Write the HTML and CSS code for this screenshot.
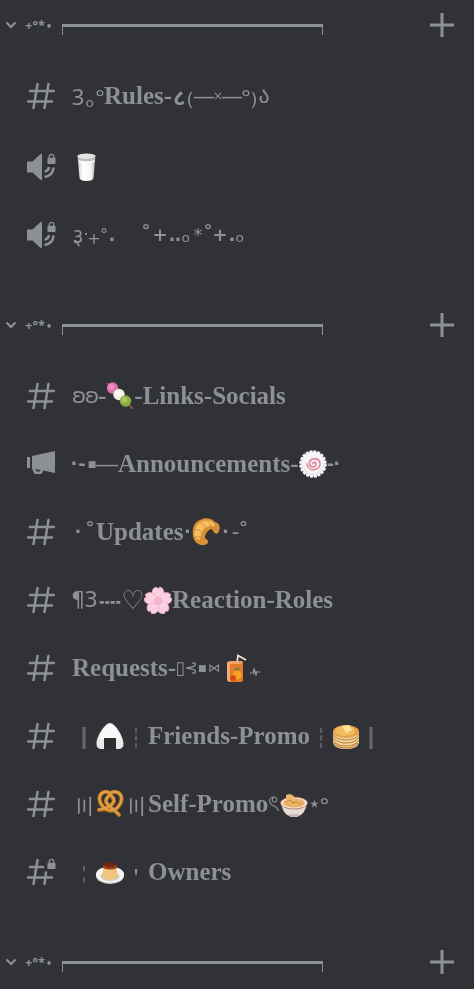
FILE: index.html
```html
<!DOCTYPE html>
<html lang="en">
<head>
  <meta charset="UTF-8">
  <meta name="viewport" content="width=device-width, initial-scale=1">
  <title>Channels</title>
  <link rel="stylesheet" href="styles.css">
</head>

<body>
  <!-- shared icons -->
  <svg class="defs" aria-hidden="true">
    <symbol id="hash" viewBox="0 0 28 28">
      <path d="M10.500 2 6.500 26M21.500 2 17.500 26M3 9H27M1 19.500H25" />
    </symbol>
    <symbol id="lock" viewBox="0 0 10 12">
      <path d="M2.500 5V3.300a2.500 2.500 0 0 1 5 0V5" fill="none" stroke="currentColor" stroke-width="1.400" />
      <rect x="0.500" y="4.600" width="9" height="7" rx="1" fill="currentColor" />
    </symbol>
    <symbol id="speaker" viewBox="0 0 28 28">
      <path d="M0 8.500H5.500L13 1.500Q15 0 15 2V26Q15 28 13 26.500L5.500 19.500H0Z" fill="currentColor" />
      <path d="M17.500 18.500Q21.500 18 22 14M17.500 24Q26 22.500 26.500 14.500" fill="none" stroke="currentColor" stroke-width="2.600" />
    </symbol>
    <symbol id="chevron" viewBox="0 0 10 8">
      <path d="M.5 1.500 5 6 9.500 1.500" />
    </symbol>
    <symbol id="plus" viewBox="0 0 24 24">
      <path d="M12 0V24M0 12H24" />
    </symbol>
  </svg>

  <nav class="sidebar">
    <section class="category">
      <header class="category-header">
        <button class="toggle" type="button">
          <svg class="chevron"><use href="#chevron" /></svg>
          <span class="stars">+°*<b>•</b></span>
          <span class="rule"></span>
        </button>
        <button class="add" type="button" aria-label="Create channel"><svg><use href="#plus" /></svg></button>
      </header>
      <div class="channels">
        <a class="channel text" href="#">
          <svg class="icon hash"><use href="#hash" /></svg>
          <span class="name"><i class="sym w12 noto">3</i><i class="sym w12 low">ₒ</i><i class="sym w8 noto">°</i>Rules-<i class="sym w14 noto bold">८</i><i class="sym w8 low medium">(</i><i class="dash">—</i><i class="sym w8 tiny">×</i><i class="dash">—</i><i class="sym w8 noto">°</i><i class="sym w8 low medium">)</i><i class="sym w12">ა</i></span>
        </a>
        <a class="channel voice" href="#">
          <svg class="icon"><use href="#speaker" /><use href="#lock" x="20" y="0" width="9" height="12" /></svg>
          <span class="name">
            <svg class="emoji" viewBox="0 0 28 28" role="img" aria-label="Glass of milk">
              <defs><linearGradient id="milk"><stop stop-color="#c9c7c6" /><stop offset=".3" stop-color="#fff" /><stop offset=".75" stop-color="#f5f3f2" /><stop offset="1" stop-color="#aaa8a8" /></linearGradient></defs>
              <path d="M5.500 2.500 7.500 25Q8 28 14.500 28T21.500 25L23.500 2.500Z" fill="url(#milk)" />
              <ellipse cx="14.500" cy="3" rx="9" ry="2.500" fill="#e5e3e1" />
              <path d="M6 4.500Q14 7 23 4.500V7.500Q14 10 6.500 7.500Z" fill="#bdbbb9" />
              <path d="M7 8Q14 10.500 22.500 8" fill="none" stroke="#fff" stroke-width="1.500" />
            </svg>
          </span>
        </a>
        <a class="channel voice" href="#">
          <svg class="icon"><use href="#speaker" /><use href="#lock" x="20" y="0" width="9" height="12" /></svg>
          <span class="name"><i class="sym w12 noto">३</i><i class="sym w4 small">·</i><i class="sym w12 low small">+</i><i class="sym w8 small">°</i><i class="sym w8 heavy">.</i><i class="sym w24"></i><i class="sym w12">˚</i><i class="sym w16 heavy">+</i><i class="sym w8 heavy">.</i><i class="sym w4 heavy">.</i><i class="sym w12">ₒ</i><i class="sym w12 star">*</i><i class="sym w8">˚</i><i class="sym w16 heavy">+</i><i class="sym w8 heavy">.</i><i class="sym w8">ₒ</i></span>
        </a>
      </div>
    </section>

    <section class="category">
      <header class="category-header">
        <button class="toggle" type="button">
          <svg class="chevron"><use href="#chevron" /></svg>
          <span class="stars">+°*<b>•</b></span>
          <span class="rule"></span>
        </button>
        <button class="add" type="button" aria-label="Create channel"><svg><use href="#plus" /></svg></button>
      </header>
      <div class="channels">
        <a class="channel text" href="#">
          <svg class="icon hash"><use href="#hash" /></svg>
          <span class="name"><i class="sym w14">ʚ</i><i class="sym w12">ʚ</i>-<svg class="emoji" viewBox="0 0 28 28" role="img" aria-label="Dango">
              <path d="M1 1 27 27" stroke="#a8642f" stroke-width="1.500" />
              <circle cx="6.500" cy="6" r="5.700" fill="#dd6fa9" /><circle cx="5.500" cy="5" r="3" fill="#ec8dc0" />
              <circle cx="13" cy="12.500" r="5.700" fill="#f2eee2" /><circle cx="12" cy="11.500" r="3" fill="#fffdf5" />
              <circle cx="19.500" cy="19" r="5.700" fill="#8bac3e" /><circle cx="18.500" cy="18" r="3" fill="#a8c660" />
            </svg>-Links-Socials</span>
        </a>
        <a class="channel text" href="#">
          <svg class="icon" viewBox="0 0 28 28">
            <path d="M0 7H3V18H0ZM5 6 28 1V23L16 20.500V21Q15.500 24 13.500 24H9Q7 24 6.500 22L5 18.500ZM8.500 19 9.500 21.500H12.500L13.500 20Z" fill="currentColor" fill-rule="evenodd" />
          </svg>
          <span class="name"><i class="sym w4 heavy">·</i><i class="sym w12 heavy">‐</i><i class="sym w8 micro">■</i><i class="dash wide">—</i>Announcements-<svg class="emoji" viewBox="0 0 28 28" role="img" aria-label="Fish cake">
              <circle cx="14" cy="14" r="12.500" fill="#e9e7ee" stroke="#f7f6fa" stroke-width="2.500" stroke-dasharray="2.800 1.130" />
              <circle cx="14" cy="13" r="10.500" fill="#f7f5f8" />
              <path d="M14 13.500c0-2 3-1.500 3 .5 0 4-6.500 4-6.500-.5 0-6 9.500-6.500 10.500-.5 1 8-12 9.500-13 1" fill="none" stroke="#e391a0" stroke-width="1.800" stroke-linecap="round" />
            </svg><i class="sym w8 heavy">‐</i><i class="sym w4 heavy">·</i></span>
        </a>
        <a class="channel text" href="#">
          <svg class="icon hash"><use href="#hash" /></svg>
          <span class="name"><i class="sym w12 heavy">·</i><i class="sym w12">˚</i>Updates<i class="sym w8 heavy">·</i><svg class="emoji" viewBox="0 0 28 28" role="img" aria-label="Croissant">
              <path d="M1 18C0 10 2 4 8 2 13-1 20 0 23 4 28 5 29 10 26 15 24 17 21 14 20 11 17 11 13 15 13 20 15 22 18 23 15 26 10 29 2 26 1 18Z" fill="#d98f35" />
              <path d="M2 16C3 9 6 4 11 3 17 1 22 4 24 9 18 6 9 9 8 22 5 22 3 20 2 16Z" fill="#f6bd62" />
              <path d="M2 12Q7 10 12 16M7 4Q13 6 14 12M15 2Q20 6 18 10M23 5Q25 9 21 12M2 20Q7 17 12 21" fill="none" stroke="#c67e31" stroke-width=".7" />
            </svg><i class="sym w12 heavy">·</i><i class="sym w8">-</i><i class="sym w8">˚</i></span>
        </a>
        <a class="channel text" href="#">
          <svg class="icon hash"><use href="#hash" /></svg>
          <span class="name"><i class="sym w12">¶</i><i class="sym w14">3</i><i class="sym w24 cjk">┉</i><i class="sym w22 big">♡</i><svg class="emoji" viewBox="0 0 28 28" role="img" aria-label="Cherry blossom">
              <g fill="#fad0e0" stroke="#efa9c7" stroke-width=".6">
                <path id="petal" d="M14 15C5 9 8 2 12 1L14 2.500 16 1C20 2 23 9 14 15Z" />
                <use href="#petal" transform="rotate(72 14 15)" /><use href="#petal" transform="rotate(144 14 15)" />
                <use href="#petal" transform="rotate(216 14 15)" /><use href="#petal" transform="rotate(288 14 15)" />
              </g>
              <circle cx="14" cy="15" r="3.500" fill="#f5b9ce" stroke="#c9788f" stroke-width=".7" stroke-dasharray="1 1" />
            </svg>Reaction-Roles</span>
        </a>
        <a class="channel text" href="#">
          <svg class="icon hash"><use href="#hash" /></svg>
          <span class="name">Requests-<i class="sym w8 medium">▯</i><i class="sym w14 small">⊰</i><i class="sym w8 micro">■</i><i class="sym w16 tiny">⋈</i><svg class="emoji" viewBox="0 0 28 28" role="img" aria-label="Juice box">
              <path d="M15 9 16 1.500 24 6" fill="none" stroke="#eadfd0" stroke-width="1.800" />
              <path d="M5 8 8 7H20L21 8V27L19 28H7L5 26Z" fill="#e77a28" />
              <path d="M5 8H8V28H7L5 26Z" fill="#f4ac78" /><path d="M8 7H20L19 10H5Z" fill="#f2a46a" />
              <circle cx="15" cy="21" r="4.500" fill="#f5a51f" /><circle cx="11" cy="24" r="3" fill="#d84b1d" />
              <path d="M12 16Q15 11 18 15Q15 18 12 16Z" fill="#79852f" />
            </svg><svg class="pulse" viewBox="0 0 10 8"><path d="M0 5H1.500M3 6 4 1 6 7 7 3M8.500 4H10" /></svg></span>
        </a>
        <a class="channel text" href="#">
          <svg class="icon hash"><use href="#hash" /></svg>
          <span class="name"><i class="sym w24 cjk">║</i><svg class="emoji" viewBox="0 0 28 28" role="img" aria-label="Rice ball">
              <path d="M14 1C19 1 27 14 27.500 21Q28 27 22 27H6Q0 27 .5 21C1 14 9 1 14 1Z" fill="#e9e9eb" />
              <path d="M14 2C18 2 23 10 25 16Q14 21 3 16C5 10 10 2 14 2Z" fill="#f8f8f8" />
              <path d="M8 16H20V27H8Z" fill="#2b2d2c" />
            </svg><i class="sym w24 cjk">┆</i>Friends-Promo<i class="sym w22 cjk">┆</i><svg class="emoji" viewBox="0 0 28 28" role="img" aria-label="Pancakes">
              <path d="M1 10V21Q3 27 14 27T27 21V10Z" fill="#f2d59d" />
              <path d="M1 12Q4 18 14 18T27 12M1 15Q4 21 14 21T27 15M1 18Q4 24 14 24T27 18M2 21Q6 26 14 26T26 21" fill="none" stroke="#b97834" />
              <ellipse cx="14" cy="9.500" rx="13" ry="6.500" fill="#e2a146" />
              <ellipse cx="13" cy="9" rx="10" ry="5" fill="#f2bd5c" />
              <path d="M10 4 17 3 20 8 14 11 12 8Z" fill="#ffe499" />
            </svg><i class="sym w22 cjk">║</i></span>
        </a>
        <a class="channel text" href="#">
          <svg class="icon hash"><use href="#hash" /></svg>
          <span class="name"><i class="sym w24 cjk">〣</i><svg class="emoji" viewBox="0 0 28 28" role="img" aria-label="Pretzel">
              <g fill="none" stroke-linecap="round" stroke-linejoin="round">
                <path id="knot" d="M3 20C10 20 17 15 18 11 18 7 14 6 14 4 16 1 23 1 25 6 27 12 22 20 15 21 7 20 2 12 4 6 6 1 12 1 14 4 14 6 9 8 10 12 12 17 19 20 23 25" stroke="#a9651c" stroke-width="4.200" />
                <path d="M3 19.500C10 19.500 17 14.500 18 10.500 18 6.500 14 5.500 14 3.500 16 1 23 1 25 5.500 27 11.500 22 19.500 15 20.500 7 19.500 2 11.500 4 5.500 6 1 12 1 14 3.500 14 5.500 9 7.500 10 11.500 12 16.500 19 19.500 23 24.500" stroke="#dda044" stroke-width="2.600" />
              </g>
            </svg><i class="sym w24 cjk">〣</i>Self-Promo<i class="sym w12">ৎ</i><svg class="emoji" viewBox="0 0 28 28" role="img" aria-label="Bowl of noodles">
              <path d="M1 13Q3 25 10 26H18Q25 25 27 13Z" fill="#e6dbd4" />
              <path d="M9 24H19L18 27H10Z" fill="#c9beb8" />
              <ellipse cx="14" cy="13" rx="13.500" ry="6" fill="#f3ece7" stroke="#ad6748" stroke-width=".8" />
              <ellipse cx="14" cy="13" rx="11" ry="4.500" fill="#e8ac63" />
              <path d="M6 14V5L10 4 14 6V11L20 9 23 13 15 17Z" fill="#edb66d" />
              <path d="M7 12Q10 8 13 13M12 14Q16 10 21 14" fill="none" stroke="#c98239" />
            </svg><i class="sym w12">⋆</i><i class="sym w8 noto">°</i></span>
        </a>
        <a class="channel text" href="#">
          <svg class="icon hash" viewBox="0 0 28 28">
            <path d="M10.500 2 6.500 26M19 14.500 17.500 26M3 9H16M1 19.500H25" />
            <use href="#lock" x="20" y="0" width="9" height="12" stroke="none" />
          </svg>
          <span class="name"><i class="sym w24 cjk">╎</i><svg class="emoji" viewBox="0 0 28 28" role="img" aria-label="Custard">
              <ellipse cx="14" cy="17.500" rx="14" ry="8.500" fill="#d7d3d0" />
              <ellipse cx="14" cy="16.500" rx="14" ry="8" fill="#f7f5f2" />
              <ellipse cx="14" cy="18.500" rx="9.500" ry="4.500" fill="#d3cbc3" />
              <path d="M8 7H20L22 18Q18 22 14 22T6 18Z" fill="#eec67c" />
              <ellipse cx="14" cy="7" rx="6.500" ry="3" fill="#6d2715" />
              <path d="M7.500 7Q14 11 20.500 7L21 10Q14 13 7 10Z" fill="#963e1c" />
            </svg><i class="sym w24 cjk low">'</i>Owners</span>
        </a>
      </div>
    </section>

    <section class="category">
      <header class="category-header">
        <button class="toggle" type="button">
          <svg class="chevron"><use href="#chevron" /></svg>
          <span class="stars">+°*<b>•</b></span>
          <span class="rule"></span>
        </button>
        <button class="add" type="button" aria-label="Create channel"><svg><use href="#plus" /></svg></button>
      </header>
    </section>
  </nav>
</body>
</html>
```
FILE: styles.css
```css
body {
  margin: 0;
  background: #313237;
  color: #8d9095;
  font-family: "Liberation Serif", serif;
}

.defs {
  display: none;
}

.category-header {
  display: flex;
  align-items: center;
  justify-content: space-between;
  height: 50px;
  padding: 0 20px 0 6px;
}

button {
  border: none;
  background: none;
  padding: 0;
  color: inherit;
  cursor: pointer;
}

.toggle {
  display: flex;
  align-items: center;
  flex: 1;
  margin-right: 107px;
}

.chevron {
  width: 10px;
  height: 8px;
  margin-right: 9px;
  overflow: visible;
  fill: none;
  stroke: currentColor;
  stroke-width: 2;
}

.stars {
  width: 37px;
  font: bold 13px/16px "Noto Sans", sans-serif;
  text-align: left;
}

.stars b {
  margin-left: 2px;
  font-size: 10px;
}

.rule {
  flex: 1;
  height: 8px;
  margin-top: 8px;
  border: 1px solid #8d9095;
  border-top-width: 3px;
  border-bottom: none;
}

.add,
.add svg {
  display: block;
  width: 24px;
  height: 24px;
  stroke: currentColor;
  stroke-width: 3;
}

.channels {
  padding: 12px 0 31px;
}

.channel {
  display: flex;
  align-items: center;
  gap: 17px;
  height: 68px;
  padding-left: 27px;
  color: inherit;
  text-decoration: none;
}

.text + .voice {
  margin-top: 3px;
}

.icon {
  flex: none;
  width: 28px;
  height: 28px;
  overflow: visible;
}

.hash {
  fill: none;
  stroke: currentColor;
  stroke-width: 2.5;
  stroke-linecap: round;
}

/* own layer, so that thin strokes are drawn in plain grey */
.name {
  display: flex;
  align-items: center;
  font-size: 25px;
  font-weight: bold;
  line-height: 32px;
  white-space: nowrap;
  will-change: transform;
}

.emoji {
  flex: none;
  width: 28px;
  height: 28px;
}

/* decorative symbols, each in a cell of its own */
.sym {
  display: flex;
  justify-content: center;
  flex: none;
  font: normal 22px/32px "DejaVu Sans", "Noto Sans", "Noto Sans CJK JP", sans-serif;
}

.w4 { width: 4px; }
.w8 { width: 8px; }
.w12 { width: 12px; }
.w14 { width: 14px; }
.w16 { width: 16px; }
.w22 { width: 22px; }
.w24 { width: 24px; }

.noto { font-family: "Noto Sans", sans-serif; }
.cjk { font-family: "Noto Sans CJK JP", sans-serif; }
.bold { font-weight: bold; }
.medium { font-size: 18px; }
.small { font-size: 16px; }
.tiny { font-size: 12px; }
.micro { font-size: 9px; }
.big { font-size: 26px; }
.low { padding-top: 8px; }
.heavy { font-weight: bold; font-size: 18px; }
.star { font-size: 18px; }

.dash {
  font-style: normal;
  font-size: 20px;
}

.wide {
  font-size: 22px;
}

.pulse {
  width: 10px;
  height: 8px;
  margin-top: 8px;
  fill: none;
  stroke: currentColor;
  stroke-width: 1.5;
}
```
